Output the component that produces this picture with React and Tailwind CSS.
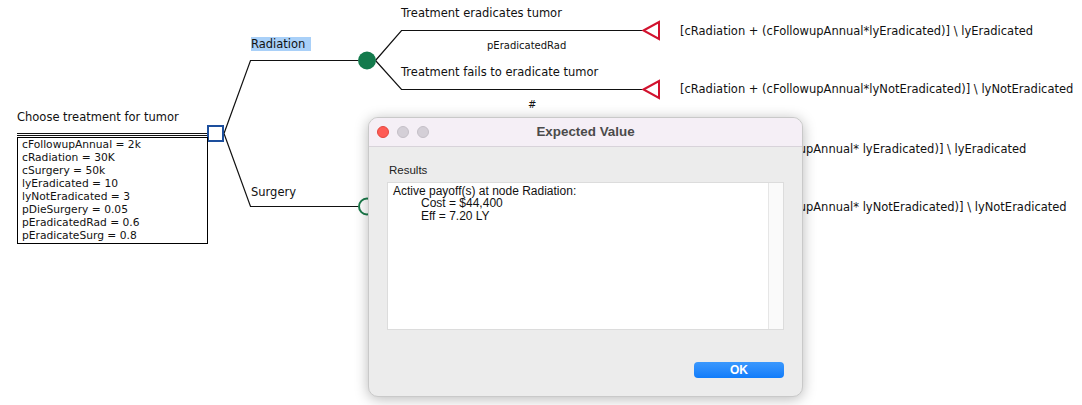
import React from "react";

const treeFont = { fontFamily: '"DejaVu Sans", Verdana, sans-serif' };
const macFont = { fontFamily: '"Liberation Sans", Arial, sans-serif' };

const variables = [
  "cFollowupAnnual = 2k",
  "cRadiation = 30K",
  "cSurgery = 50k",
  "lyEradicated = 10",
  "lyNotEradicated = 3",
  "pDieSurgery = 0.05",
  "pEradicatedRad = 0.6",
  "pEradicateSurg = 0.8",
];

const TreeLines = () => (
  <svg className="absolute inset-0" width="1082" height="405" viewBox="0 0 1082 405">
    <g stroke="#111" strokeWidth="1.2" fill="none">
      <line x1="17" y1="133.5" x2="207" y2="133.5" />
      <line x1="17" y1="135.5" x2="207" y2="135.5" />
      <polyline points="224,133.5 250.5,60.5 358,60.5" />
      <polyline points="224,133.5 250.5,206.5 358,206.5" />
      <polyline points="375.5,60.5 401.5,30.5 643,30.5" />
      <polyline points="375.5,60.5 401.5,89.5 643,89.5" />
      <polyline points="376,206.5 401.5,148.5 643,148.5" />
      <polyline points="376,206.5 401.5,207.5 643,207.5" />
    </g>
    <rect x="208" y="126" width="15" height="15" fill="#fff" stroke="#1d4f9d" strokeWidth="2" />
    <circle cx="367" cy="60.5" r="9" fill="#137a4c" />
    <circle cx="367" cy="206.5" r="8" fill="#fff" stroke="#1a7a4a" strokeWidth="2" />
    <g fill="#fff" stroke="#d2122e" strokeWidth="2">
      <polygon points="643.5,30.5 659,22 659,39" />
      <polygon points="643.5,89.5 659,81 659,98" />
      <polygon points="643.5,148.5 659,140 659,157" />
      <polygon points="643.5,207.5 659,199 659,216" />
    </g>
  </svg>
);

const Label = ({ className, children }) => (
  <div className={"absolute whitespace-nowrap leading-[14px] text-[11.5px] text-[#111] " + className}>
    {children}
  </div>
);

const ExpectedValueDialog = () => (
  <div
    className="absolute left-[368px] top-[117px] w-[435px] h-[280px] rounded-[10px] bg-[#ececec] border border-[#c9c9c9] overflow-hidden flex flex-col shadow-[0_2px_14px_rgba(0,0,0,0.28)]"
    style={macFont}
  >
    <div className="h-[29px] shrink-0 bg-[#f5eff6] border-b border-[#d8d3da] grid grid-cols-[1fr_auto_1fr] items-center">
      <div className="flex items-center gap-2 pl-[8px]">
        <span className="w-3 h-3 rounded-full bg-[#fe5b55] border border-[#e2463f]" />
        <span className="w-3 h-3 rounded-full bg-[#d4cfd7] border border-[#c4bfc7]" />
        <span className="w-3 h-3 rounded-full bg-[#d4cfd7] border border-[#c4bfc7]" />
      </div>
      <div className="text-[13.4px] font-bold text-[#4b4b4b] leading-none">Expected Value</div>
      <div />
    </div>
    <div className="flex-1 flex flex-col px-[18px] pt-[16px]">
      <div className="text-[11.5px] leading-[14px] text-[#222] pl-[2px]">Results</div>
      <div className="mt-[5px] h-[148px] flex border border-[#dcdcdc] bg-white">
        <div className="flex-1 pl-[5px] pt-[2px] text-[12px] leading-[12.4px] text-[#111]">
          <div>Active payoff(s) at node Radiation:</div>
          <div className="pl-[28px]">Cost = $44,400</div>
          <div className="pl-[28px]">Eff = 7.20 LY</div>
        </div>
        <div className="w-[15px] bg-[#fafafa] border-l border-[#e6e6e6]" />
      </div>
      <div className="flex justify-end mt-[32px]">
        <button className="w-[90px] h-[16px] rounded-[4px] bg-linear-to-b from-[#3a98fd] to-[#0f7cfa] text-white text-[12px] font-bold leading-none">
          OK
        </button>
      </div>
    </div>
  </div>
);

export default function App() {
  return (
    <div className="relative w-[1082px] h-[405px] bg-white overflow-hidden" style={treeFont}>
      <TreeLines />

      <Label className="left-[17px] top-[110px]">Choose treatment for tumor</Label>
      <div className="absolute left-[17px] top-[137px] w-[191px] h-[107px] bg-white border border-black pl-[4px] text-[10.7px] leading-[13px] text-[#111]">
        {variables.map((v) => (
          <div key={v} className="whitespace-nowrap">{v}</div>
        ))}
      </div>

      <div className="absolute left-[251px] top-[37px] w-[60px] h-[14px] bg-[#a9d0f8] text-[11.5px] leading-[14px] text-[#111]">
        Radiation
      </div>
      <Label className="left-[251px] top-[185px]">Surgery</Label>

      <Label className="left-[401px] top-[6px]">Treatment eradicates tumor</Label>
      <Label className="left-[487px] top-[39px] text-[10px]!">pEradicatedRad</Label>
      <Label className="left-[401px] top-[65px]">Treatment fails to eradicate tumor</Label>
      <Label className="left-[528px] top-[98px] text-[10px]!">#</Label>

      <Label className="left-[680px] top-[24px]">[cRadiation + (cFollowupAnnual*lyEradicated)] \ lyEradicated</Label>
      <Label className="left-[680px] top-[82px]">[cRadiation + (cFollowupAnnual*lyNotEradicated)] \ lyNotEradicated</Label>
      <Label className="left-[679px] top-[142px]">[cSurgery + (cFollowupAnnual* lyEradicated)] \ lyEradicated</Label>
      <Label className="left-[679px] top-[200px]">[cSurgery + (cFollowupAnnual* lyNotEradicated)] \ lyNotEradicated</Label>

      <ExpectedValueDialog />
    </div>
  );
}
